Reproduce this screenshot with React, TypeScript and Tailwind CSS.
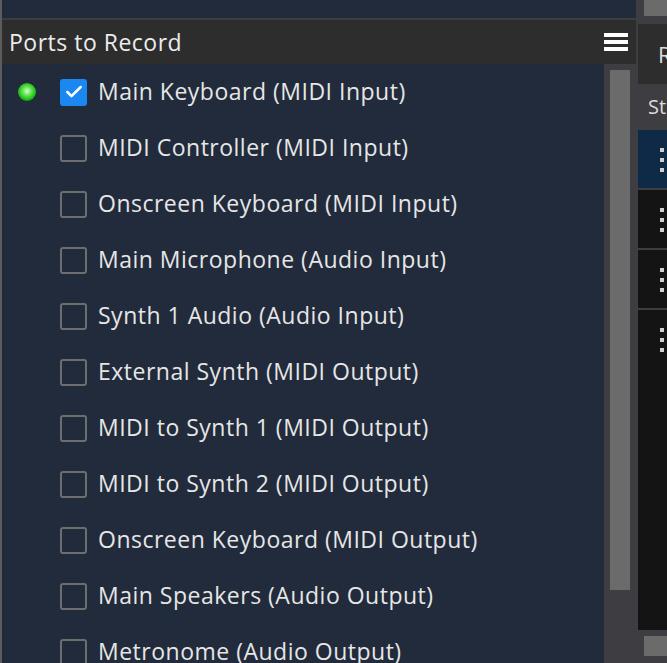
import { Check } from 'lucide-react';

const ports = [
  { label: 'Main Keyboard (MIDI Input)', checked: true, active: true },
  { label: 'MIDI Controller (MIDI Input)' },
  { label: 'Onscreen Keyboard (MIDI Input)' },
  { label: 'Main Microphone (Audio Input)' },
  { label: 'Synth 1 Audio (Audio Input)' },
  { label: 'External Synth (MIDI Output)' },
  { label: 'MIDI to Synth 1 (MIDI Output)' },
  { label: 'MIDI to Synth 2 (MIDI Output)' },
  { label: 'Onscreen Keyboard (MIDI Output)' },
  { label: 'Main Speakers (Audio Output)' },
  { label: 'Metronome (Audio Output)' },
];

function Dots() {
  return (
    <div className="flex flex-col gap-[6px] pl-[22px] pt-[18px]">
      <span className="w-[4px] h-[4px] bg-[#cfcfcf]" />
      <span className="w-[4px] h-[4px] bg-[#cfcfcf]" />
      <span className="w-[4px] h-[4px] bg-[#cfcfcf]" />
    </div>
  );
}

export default function App() {
  return (
    <div
      className="w-[667px] h-[663px] flex overflow-hidden bg-[#3e3d41]"
      style={{ fontFamily: '"Open Sans", "Noto Sans", sans-serif' }}
    >
      {/* Left panel */}
      <div className="w-[636px] h-full flex flex-col border-l-2 border-[#5c5c5c] shrink-0">
        <div className="h-[18px] bg-[#212b3b] shrink-0" />
        <div className="h-[2px] bg-[#3e3d41] shrink-0" />
        <div className="h-[44px] bg-[#2d2d2d] flex items-center justify-between pl-[7px] pr-[8px] shrink-0">
          <span className="text-[23px] text-[#ececec] tracking-[0.5px]">Ports to Record</span>
          <div className="flex flex-col gap-[3px] w-[24px]">
            <span className="h-[4px] bg-white" />
            <span className="h-[4px] bg-white" />
            <span className="h-[4px] bg-white" />
          </div>
        </div>
        <div className="flex-1 flex bg-[#212b3b] min-h-0">
          <div className="flex-1 flex flex-col">
            {ports.map((p) => (
              <div key={p.label} className="h-[56px] flex items-center shrink-0">
                <div className="w-[58px] flex justify-center pr-[8px]">
                  {p.active && (
                    <span
                      className="w-[18px] h-[18px] rounded-full"
                      style={{ background: 'radial-gradient(circle at 50% 45%, #e0fad8 0%, #6ae85a 30%, #19b812 65%, #0b6a0a 100%)' }}
                    />
                  )}
                </div>
                {p.checked ? (
                  <span className="w-[27px] h-[27px] rounded-[3px] bg-[#1a88f0] flex items-center justify-center shrink-0">
                    <Check size={20} strokeWidth={3} color="#ffffff" />
                  </span>
                ) : (
                  <span className="w-[27px] h-[27px] rounded-[3px] border-2 border-[#6e6e6e] shrink-0" />
                )}
                <span className="ml-[11px] -mt-[2px] text-[23px] text-[#e6e6e6] whitespace-nowrap tracking-[0.5px]">{p.label}</span>
              </div>
            ))}
          </div>
          <div className="w-[32px] bg-[#3e3d41] px-[6px] pt-[6px] shrink-0">
            <div className="h-[520px] bg-[#6b6b6b]" />
          </div>
        </div>
      </div>
      {/* Right panel */}
      <div className="flex-1 ml-[2px] flex flex-col bg-[#3e3d41]">
        <div className="h-[16px] ml-[6px] bg-[#6b6b6b] shrink-0" />
        <div className="h-[8px] shrink-0" />
        <div className="h-[60px] bg-[#2d2d2d] flex items-center pl-[20px] shrink-0">
          <span className="text-[22px] text-[#dcdcdc]">R</span>
        </div>
        <div className="h-[46px] flex items-center pl-[10px] shrink-0">
          <span className="text-[20px] text-[#dcdcdc]">St</span>
        </div>
        <div className="h-[58px] bg-[#0e2a47] shrink-0"><Dots /></div>
        <div className="h-[2px] shrink-0" />
        <div className="h-[58px] bg-[#141414] shrink-0"><Dots /></div>
        <div className="h-[2px] shrink-0" />
        <div className="h-[58px] bg-[#141414] shrink-0"><Dots /></div>
        <div className="h-[2px] shrink-0" />
        <div className="h-[320px] bg-[#141414] shrink-0"><Dots /></div>
        <div className="h-[6px] shrink-0" />
        <div className="h-[20px] ml-[6px] bg-[#6b6b6b] shrink-0" />
      </div>
    </div>
  );
}
